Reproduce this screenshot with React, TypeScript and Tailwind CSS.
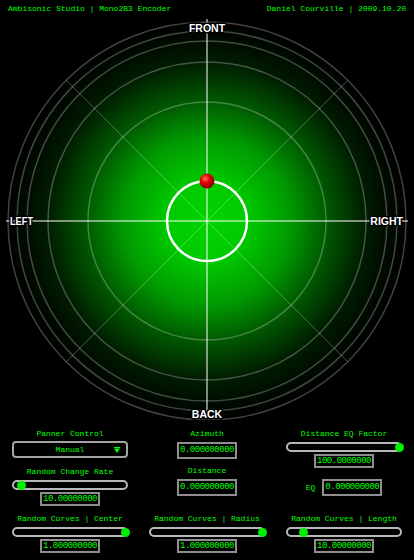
import React from "react";

const mono = "font-['Liberation_Mono','DejaVu_Sans_Mono',monospace]";
const green = "text-[#00ff00]";

const rings = [199, 190, 180, 159, 119];

function Panner() {
    const cx = 207;
    const cy = 203;
    const d = 199 * Math.SQRT1_2;
    return (
        <svg width={414} height={402} className="block">
            <defs>
                <radialGradient id="field" cx={cx} cy={cy} r={199} gradientUnits="userSpaceOnUse">
                    <stop offset="0" stopColor="#00d400"/>
                    <stop offset="0.2" stopColor="#00ca00"/>
                    <stop offset="0.42" stopColor="#009a00"/>
                    <stop offset="0.6" stopColor="#005a00"/>
                    <stop offset="0.8" stopColor="#001c00"/>
                    <stop offset="1" stopColor="#000000"/>
                </radialGradient>
                <radialGradient id="ball" cx="0.38" cy="0.35" r="0.7">
                    <stop offset="0" stopColor="#ff6a5a"/>
                    <stop offset="0.45" stopColor="#e00000"/>
                    <stop offset="1" stopColor="#7a0000"/>
                </radialGradient>
            </defs>
            <circle cx={cx} cy={cy} r={199} fill="url(#field)"/>
            {rings.map(r => (
                <circle key={r} cx={cx} cy={cy} r={r} fill="none" stroke="#ffffff" strokeOpacity={0.26} strokeWidth={1.5}/>
            ))}
            <line x1={cx - d} y1={cy - d} x2={cx + d} y2={cy + d} stroke="#ffffff" strokeOpacity={0.28} strokeWidth={1}/>
            <line x1={cx + d} y1={cy - d} x2={cx - d} y2={cy + d} stroke="#ffffff" strokeOpacity={0.28} strokeWidth={1}/>
            <line x1={cx} y1={1} x2={cx} y2={401} stroke="#ffffff" strokeWidth={1}/>
            <line x1={6} y1={cy} x2={408} y2={cy} stroke="#ffffff" strokeWidth={1}/>
            <circle cx={cx} cy={cy} r={40} fill="none" stroke="#ffffff" strokeWidth={2.5}/>
            <circle cx={cx} cy={cy - 40} r={7.5} fill="url(#ball)"/>
            <g fontFamily="'Liberation Sans', Arial, sans-serif" fontSize={10.5} fontWeight={700} fill="#ffffff"
               stroke="#000000" strokeWidth={3} strokeLinejoin="round" style={{paintOrder: "stroke"}}>
                <text x={cx} y={14} textAnchor="middle">FRONT</text>
                <text x={cx} y={400} textAnchor="middle">BACK</text>
                <text x={10} y={cy + 4} textLength={23} lengthAdjust="spacingAndGlyphs">LEFT</text>
                <text x={403} y={cy + 4} textAnchor="end">RIGHT</text>
            </g>
        </svg>
    );
}

function Label({children, className = ""}: {children: React.ReactNode; className?: string}) {
    return <div className={`${mono} ${green} text-[8px] leading-[10px] whitespace-pre ${className}`}>{children}</div>;
}

function NumBox({value, tall = false, className = ""}: {value: string; tall?: boolean; className?: string}) {
    return (
        <div className={`w-[60px] ${tall ? "h-[17px]" : "h-[14px]"} border-2 border-[#8e8e8e] bg-black flex items-center justify-center ${className}`}>
            <span className={`${mono} ${green} text-[9px] leading-none tracking-[-0.5px]`}>{value}</span>
        </div>
    );
}

function Slider({pos, className = ""}: {pos: number; className?: string}) {
    return (
        <div className={`relative w-[116px] h-[10px] rounded-full border-2 border-[#b8b8b8] bg-black ${className}`}>
            <div className="absolute top-1/2 w-[9px] h-[9px] -mt-[4.5px] -ml-[4.5px] rounded-full bg-[#00f000]"
                 style={{left: `${pos}px`}}/>
        </div>
    );
}

function Dropdown() {
    return (
        <div className="relative w-[116px] h-[17px] rounded-[4px] border-2 border-[#a4a4a4] bg-black flex items-center justify-center mt-[2px]">
            <span className={`${mono} ${green} text-[8px] leading-none`}>Manual</span>
            <svg width={6} height={6} className="absolute right-[6px] top-[4px]">
                <rect x={0} y={0} width={6} height={1} fill="#00ff00"/>
                <polygon points="0,1.5 6,1.5 3,6" fill="#00ff00"/>
            </svg>
        </div>
    );
}

export default function App() {
    return (
        <div className="w-[414px] h-[560px] bg-black overflow-hidden">
            <div className={`h-[18px] px-[8px] flex items-center justify-between ${mono} text-[8px] text-[#00ff00]`}>
                <span className="whitespace-pre">Ambisonic Studio | Mono2B3 Encoder</span>
                <span className="whitespace-pre">Daniel Courville | 2009.10.20</span>
            </div>
            <Panner/>
            <div className="px-[12px] pt-[9px]">
                <div className="grid grid-cols-[116px_116px_116px] justify-between h-[38px]">
                    <div className="flex flex-col items-center">
                        <Label>Panner Control</Label>
                        <Dropdown/>
                    </div>
                    <div className="flex flex-col items-center">
                        <Label>Azimuth</Label>
                        <NumBox value="0.000000000" tall className="mt-[3px]"/>
                    </div>
                    <div className="flex flex-col items-center">
                        <Label>Distance EQ Factor</Label>
                        <Slider pos={111} className="mt-[3px]"/>
                        <NumBox value="100.0000000" className="mt-[2px]"/>
                    </div>
                </div>
                <div className="grid grid-cols-[116px_116px_116px] justify-between h-[38px]">
                    <div className="flex flex-col items-center">
                        <Label>Random Change Rate</Label>
                        <Slider pos={7} className="mt-[3px]"/>
                        <NumBox value="10.00000000" className="mt-[2px]"/>
                    </div>
                    <div className="flex flex-col items-center -mt-[1px]">
                        <Label>Distance</Label>
                        <NumBox value="0.000000000" tall className="mt-[3px]"/>
                    </div>
                    <div className="flex items-start justify-center gap-[7px] pt-[12px]">
                        <Label className="mt-[4px]">EQ</Label>
                        <NumBox value="0.000000000" tall/>
                    </div>
                </div>
                <div className="grid grid-cols-[116px_116px_116px] justify-between mt-[9px]">
                    <div className="flex flex-col items-center">
                        <Label>Random Curves | Center</Label>
                        <Slider pos={111} className="mt-[3px]"/>
                        <NumBox value="1.000000000" className="mt-[2px]"/>
                    </div>
                    <div className="flex flex-col items-center">
                        <Label>Random Curves | Radius</Label>
                        <Slider pos={111} className="mt-[3px]"/>
                        <NumBox value="1.000000000" className="mt-[2px]"/>
                    </div>
                    <div className="flex flex-col items-center">
                        <Label>Random Curves | Length</Label>
                        <Slider pos={15} className="mt-[3px]"/>
                        <NumBox value="10.00000000" className="mt-[2px]"/>
                    </div>
                </div>
            </div>
        </div>
    );
}
